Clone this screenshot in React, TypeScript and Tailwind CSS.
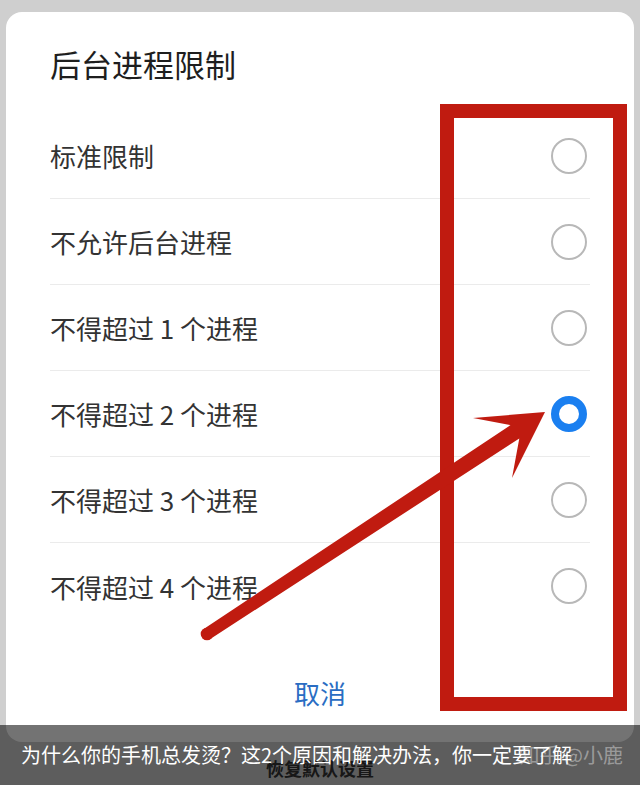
import React from 'react';

const options = [
  '标准限制',
  '不允许后台进程',
  '不得超过 1 个进程',
  '不得超过 2 个进程',
  '不得超过 3 个进程',
  '不得超过 4 个进程',
];

function Radio({ checked }: { checked: boolean }) {
  if (checked) {
    return <span className="block mr-[3px] w-[36px] h-[36px] rounded-full border-[8px] border-[#1a7ff0] bg-white" />;
  }
  return <span className="block mr-[3px] w-[36px] h-[36px] rounded-full border-[2px] border-[#b8b8b8] bg-white" />;
}

function Arrow() {
  // red annotation arrow drawn on top of the screenshot
  return (
    <svg className="absolute inset-0 pointer-events-none" width="640" height="785" viewBox="0 0 640 785">
      <polygon
        points="203.7,629 510.5,425.1 473,418 545,412 512,478 519.3,438.5 210.3,639"
        fill="#c01b10"
      />
      <circle cx="207" cy="634" r="6.3" fill="#c01b10" />
    </svg>
  );
}

export default function App() {
  return (
    <div className="relative w-[640px] h-[785px] overflow-hidden bg-[#cfcfcf] font-['Noto_Sans_CJK_SC',sans-serif]">
      <div className="mx-[6px] mt-[12px] h-[730px] rounded-[16px] bg-white px-[44px] flex flex-col">
        <h1 className="pt-[32px] text-[31px] leading-[40px] text-[#1e1e1e] font-normal">后台进程限制</h1>
        <div className="mt-[29px] flex flex-col">
          {options.map((o, i) => (
            <div
              key={o}
              className={
                i < options.length - 1
                  ? 'h-[86px] flex items-center justify-between border-b border-[#ebebeb]'
                  : 'h-[86px] flex items-center justify-between'
              }
            >
              <span className="text-[26px] text-[#333333]">{o}</span>
              <Radio checked={i === 3} />
            </div>
          ))}
        </div>
        <div className="mt-[44px] h-[40px] leading-[40px] text-center text-[26px] text-[#2a6dc3]">取消</div>
      </div>
      <div className="pt-[16px] text-center text-[18px] leading-[20px] font-bold text-[#333333]">恢复默认设置</div>

      {/* annotation box */}
      <div className="absolute left-[440px] top-[104px] w-[187px] h-[607px] border-[14px] border-[#c01b10]" />
      <Arrow />

      <div className="absolute left-0 right-0 bottom-0 h-[60px] bg-black/55 flex items-center px-[21px]">
        <span className="absolute right-[17px] text-[20px] text-white/40">知乎 @小鹿</span>
        <span className="relative text-[20px] text-white whitespace-nowrap">
          为什么你的手机总发烫？这2个原因和解决办法，你一定要了解
        </span>
      </div>
    </div>
  );
}
